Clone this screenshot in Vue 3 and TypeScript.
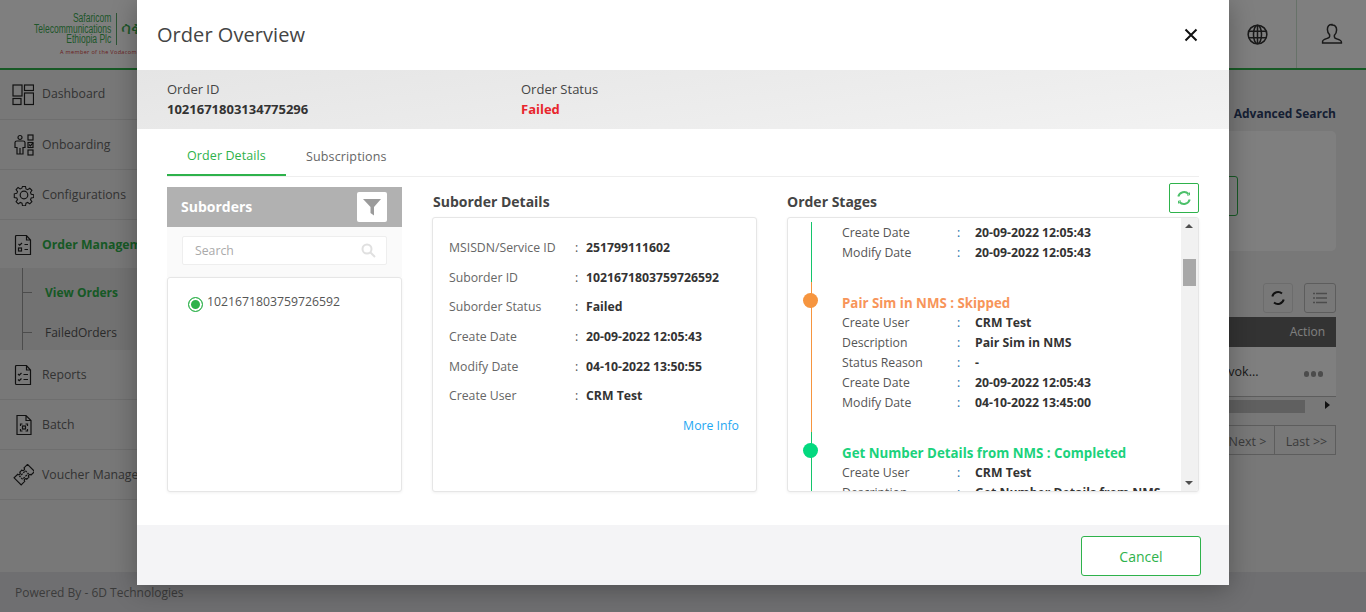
<script setup lang="ts">
import { ref } from 'vue'

const activeTab = ref('Order Details')
const tabs = ['Order Details', 'Subscriptions']

const navTop = [
  { name: 'Dashboard', icon: 'dash' },
  { name: 'Onboarding', icon: 'onboard' },
  { name: 'Configurations', icon: 'gear' },
  { name: 'Order Management', icon: 'order', active: true }
]
const navBottom = [
  { name: 'Reports', icon: 'report' },
  { name: 'Batch', icon: 'batch' },
  { name: 'Voucher Management', icon: 'voucher' }
]

const suborderDetails = [
  ['MSISDN/Service ID', '251799111602'],
  ['Suborder ID', '1021671803759726592'],
  ['Suborder Status', 'Failed'],
  ['Create Date', '20-09-2022 12:05:43'],
  ['Modify Date', '04-10-2022 13:50:55'],
  ['Create User', 'CRM Test']
]

const stages = [
  {
    rows: [
      ['Create Date', '20-09-2022 12:05:43'],
      ['Modify Date', '20-09-2022 12:05:43']
    ]
  },
  {
    title: 'Pair Sim in NMS : Skipped',
    tone: 'skipped',
    rows: [
      ['Create User', 'CRM Test'],
      ['Description', 'Pair Sim in NMS'],
      ['Status Reason', '-'],
      ['Create Date', '20-09-2022 12:05:43'],
      ['Modify Date', '04-10-2022 13:45:00']
    ]
  },
  {
    title: 'Get Number Details from NMS : Completed',
    tone: 'completed',
    rows: [
      ['Create User', 'CRM Test'],
      ['Description', 'Get Number Details from NMS']
    ]
  }
]
</script>

<template>
  <div class="page">
    <header class="topbar">
      <div class="logo">
        <div class="logo-main">
          <div class="logo-name">
            <div class="logo-squeeze">Safaricom<br />Telecommunications<br />Ethiopia Plc</div>
          </div>
          <div class="logo-am">ሳፋ</div>
        </div>
        <div class="logo-sub">A member of the Vodacom family</div>
      </div>
      <div class="top-actions">
        <div class="top-btn globe">
          <svg width="21" height="21" viewBox="0 0 22 22" fill="none" stroke="#333" stroke-width="1.6">
            <circle cx="11" cy="11" r="9.8" />
            <ellipse cx="11" cy="11" rx="4.2" ry="9.8" />
            <path d="M11 1v20M2 7.500h18M2 14.500h18" />
          </svg>
        </div>
        <div class="top-btn user">
          <svg width="22" height="22" viewBox="0 0 22 22" fill="none" stroke="#333" stroke-width="1.5">
            <path d="M11 1.500c-3 0-4.600 2.200-4.600 5 0 2.200 1 4 2.200 5.200v1.800c0 .8-.8 1.300-2 1.700-2.800.9-5 1.500-5 3.300v1.500h18.800V19c0-1.800-2.200-2.400-5-3.300-1.200-.4-2-.9-2-1.700v-1.800c1.200-1.200 2.200-3 2.200-5.200 0-2.800-1.600-5-4.600-5z" />
          </svg>
        </div>
      </div>
    </header>

    <div class="body">
      <aside class="sidebar">
        <nav class="nav">
          <div v-for="item in navTop" :key="item.name" class="nav-item" :class="{ active: item.active }">
            <svg class="nav-icon" width="22" height="22" viewBox="0 0 22 22" fill="none" stroke="#222" stroke-width="1.2">
              <template v-if="item.icon === 'dash'">
                <rect x="1" y="1" width="9" height="11" />
                <rect x="12.500" y="1" width="9" height="5.500" />
                <rect x="1" y="14.500" width="8" height="6" />
                <rect x="12.500" y="9" width="9" height="11.500" />
              </template>
              <template v-else-if="item.icon === 'onboard'">
                <circle cx="8" cy="3.500" r="2" />
                <path d="M3 8.500c0-1 1-1.500 2-1.500h6c1 0 2 .5 2 1.500v5h-2V20H5v-6.500H3zM8 14v6" />
                <rect x="16" y="1" width="5" height="5" />
                <rect x="16" y="8.500" width="5" height="5" />
                <rect x="16" y="16" width="5" height="5" />
                <path d="M17 10.500l1.300 1.300 2.700-2.800" />
              </template>
              <template v-else-if="item.icon === 'gear'">
                <circle cx="12" cy="11" r="3.800" />
                <path d="M10.300 1.500h3.400l.5 2.800 1.900.8 2.300-1.600 2.400 2.400-1.600 2.300.8 1.900 2.800.5v3.200l-2.800.5-.8 1.900 1.600 2.300-2.400 2.400-2.300-1.600-1.900.8-.5 2.800h-3.400l-.5-2.800-1.900-.8-2.300 1.600-2.400-2.400 1.600-2.300-.8-1.900-2.800-.5V9.700l2.800-.5.8-1.900-1.600-2.300L5.400 2.600l2.300 1.600 1.900-.8z" transform="translate(1.200 1.100) scale(.9)" />
              </template>
              <template v-else>
                <path d="M4.500 1.500h10l4 4.500v14.500h-14a1 1 0 0 1-1-1v-17a1 1 0 0 1 1-1zM14.500 1.500V6h4" />
                <path d="M6.500 10l1.200 1.200L10 9M12.500 10.500h3.500M12.500 15.500h3.500" />
                <rect x="6.500" y="14" width="3" height="3" />
              </template>
            </svg>
            <span>{{ item.name }}</span>
          </div>
          <div class="subnav">
            <div class="sub-item current">View Orders</div>
            <div class="sub-item">FailedOrders</div>
          </div>
          <div v-for="item in navBottom" :key="item.name" class="nav-item">
            <svg class="nav-icon" width="22" height="22" viewBox="0 0 22 22" fill="none" stroke="#222" stroke-width="1.2">
              <template v-if="item.icon === 'report'">
                <path d="M4.500 1.500h10l4 4.500v14.500h-14a1 1 0 0 1-1-1v-17a1 1 0 0 1 1-1zM14.500 1.500V6h4" />
                <path d="M6 10l1.200 1.200L9.500 9M6 15.500l1.200 1.200 2.300-2.200M11.500 10.500h4.500M11.500 15.500h4.500" />
              </template>
              <template v-else-if="item.icon === 'batch'">
                <path d="M5 1.500h9l5 5v14H5zM14 1.500v5h5" />
                <path d="M8.500 12v-2h2M13.500 10h2v2M15.500 15v2h-2M10.500 17h-2v-2" />
                <rect x="10.500" y="12" width="3" height="3" />
              </template>
              <template v-else>
                <g transform="rotate(45 12 11)">
                  <path d="M7 1.500h10v5a1.500 1.500 0 0 0 0 3v3a1.500 1.500 0 0 0 0 3v5H7v-5a1.500 1.500 0 0 0 0-3v-3a1.500 1.500 0 0 0 0-3z" transform="translate(0 -.5)" />
                  <path d="M10 7h4v8h-4z" stroke-dasharray="2 1" />
                </g>
              </template>
            </svg>
            <span>{{ item.name }}</span>
          </div>
        </nav>
        <div class="powered">Powered By - 6D Technologies</div>
      </aside>

      <main class="main">
        <div class="adv-link">Advanced Search</div>
        <div class="adv-card"><div class="adv-btn"></div></div>
        <div class="tools">
          <div class="tool">
            <svg width="18" height="18" viewBox="0 0 18 18" fill="none" stroke="#222" stroke-width="2">
              <path d="M3.300 7.500A6 6 0 0 1 13 4.500M14.700 10.500A6 6 0 0 1 5 13.500" />
            </svg>
          </div>
          <div class="tool wide">
            <svg width="14" height="12" viewBox="0 0 14 12" fill="none" stroke="#999" stroke-width="1.500">
              <path d="M3 1.500h11M3 6h11M3 10.500h11M0 1.500h2M0 6h2M0 10.500h2" />
            </svg>
          </div>
        </div>
        <div class="table-head"><span>Action</span></div>
        <div class="table-row">
          <span class="cell-text">Revok...</span>
          <span class="dots"><i></i><i></i><i></i></span>
        </div>
        <div class="table-scroll">
          <div class="table-thumb"></div>
          <div class="table-arrow"></div>
        </div>
        <div class="pager">
          <span class="page-btn next">Next &gt;</span>
          <span class="page-btn last">Last &gt;&gt;</span>
        </div>
      </main>
    </div>

    <div class="overlay"></div>

    <section class="modal">
      <div class="modal-head">
        <h2>Order Overview</h2>
        <svg class="close" width="14" height="14" viewBox="0 0 14 14" fill="none" stroke="#111" stroke-width="2">
          <path d="M1.500 1.500l11 11M12.500 1.500l-11 11" />
        </svg>
      </div>

      <div class="summary">
        <div class="summary-col">
          <div>Order ID</div>
          <b>1021671803134775296</b>
        </div>
        <div class="summary-col">
          <div>Order Status</div>
          <b class="failed">Failed</b>
        </div>
      </div>

      <div class="tabs">
        <div v-for="t in tabs" :key="t" class="tab" :class="{ on: t === activeTab }" @click="activeTab = t">{{ t }}</div>
      </div>

      <div class="columns">
        <div class="col-sub">
          <div class="sub-head">
            <span>Suborders</span>
            <div class="filter">
              <svg width="18" height="18" viewBox="0 0 18 18" fill="#9b9b9b">
                <path d="M0 1h18l-7 8v8.500L7.500 15V9z" />
              </svg>
            </div>
          </div>
          <div class="search-wrap">
            <div class="search">
              <span>Search</span>
              <svg width="15" height="15" viewBox="0 0 15 15" fill="none" stroke="#e0e0e0" stroke-width="2">
                <circle cx="6" cy="6" r="4.500" />
                <path d="M9.500 9.500L14 14" />
              </svg>
            </div>
          </div>
          <div class="sub-list">
            <span class="radio"></span>
            <span class="sub-id">1021671803759726592</span>
          </div>
        </div>

        <div class="col-details">
          <h3>Suborder Details</h3>
          <div class="details-card">
            <div v-for="r in suborderDetails" :key="r[0]" class="detail-row">
              <span class="d-label">{{ r[0] }}</span>
              <span class="d-colon">:</span>
              <b>{{ r[1] }}</b>
            </div>
            <div class="more">More Info</div>
          </div>
        </div>

        <div class="col-stages">
          <div class="stages-head">
            <h3>Order Stages</h3>
            <div class="refresh">
              <svg width="16" height="16" viewBox="0 0 16 16" fill="none" stroke="#4cc06a" stroke-width="2">
                <path d="M2.300 6.500A6 6 0 0 1 12.500 4M13.700 9.500A6 6 0 0 1 3.500 12" />
                <path d="M13.500 2.500v2.500H11M2.500 13.500V11H5" stroke-width="1" />
              </svg>
            </div>
          </div>
          <div class="stages-card">
            <div class="stages-view">
              <div v-for="(s, i) in stages" :key="i" class="stage" :class="s.tone">
                <span v-if="s.title" class="dot"></span>
                <div v-if="s.title" class="stage-title">{{ s.title }}</div>
                <div v-for="r in s.rows" :key="r[0]" class="stage-row">
                  <span class="s-label">{{ r[0] }}</span>
                  <span class="s-colon">:</span>
                  <b>{{ r[1] }}</b>
                </div>
              </div>
            </div>
            <div class="scrollbar">
              <div class="arrow up"></div>
              <div class="thumb"></div>
              <div class="arrow down"></div>
            </div>
          </div>
        </div>
      </div>

      <div class="modal-foot">
        <button class="cancel">Cancel</button>
      </div>
    </section>
  </div>
</template>

<style>
html, body {
  margin: 0;
  height: 100%;
  overflow: hidden;
}
</style>

<style scoped>
.page {
  position: relative;
  width: 1366px;
  height: 612px;
  overflow: hidden;
  display: flex;
  flex-direction: column;
  background: #f1f1f1;
  font-family: "Open Sans", sans-serif;
  font-size: 12.25px;
  color: #555;
}

.topbar {
  height: 68px;
  flex: none;
  display: flex;
  justify-content: space-between;
  background: #fff;
  border-bottom: 2px solid #2eb24b;
}

.logo {
  width: 137px;
  padding-top: 13px;
  box-sizing: border-box;
  overflow: hidden;
  white-space: nowrap;
}

.logo-main {
  display: flex;
  justify-content: flex-end;
  margin-right: -26px;
}

.logo-name {
  width: 112px;
  padding-right: 5px;
  border-right: 1px solid #5aa86a;
  text-align: right;
  font-family: "Liberation Sans", sans-serif;
  font-size: 12px;
  line-height: 10.5px;
  color: #3fae55;
}

.logo-squeeze {
  transform: scaleX(.71);
  transform-origin: right center;
}

.logo-am {
  padding-left: 4px;
  width: 42px;
  font-family: "Noto Sans", "DejaVu Sans", sans-serif;
  font-size: 17px;
  line-height: 30px;
  color: #3fae55;
}

.logo-sub {
  margin: 3px 0 0 60px;
  font-size: 5.5px;
  letter-spacing: .35px;
  color: #d23a3a;
}

.top-actions {
  display: flex;
}

.top-btn {
  width: 69px;
  display: flex;
  align-items: center;
  justify-content: center;
}

.top-btn.globe {
  width: 70px;
  padding-right: 8px;
  box-sizing: border-box;
}

.top-btn.user {
  border-left: 1px solid #cfe5d3;
}

.body {
  flex: 1;
  display: flex;
  min-height: 0;
}

.sidebar {
  width: 200px;
  flex: none;
  display: flex;
  flex-direction: column;
  justify-content: space-between;
}

.nav-item {
  height: 49px;
  display: flex;
  align-items: center;
  gap: 8px;
  padding-left: 12px;
  border-bottom: 1px solid #dcdcdc;
  color: #666;
  white-space: nowrap;
  overflow: hidden;
}

.nav-item:first-child span {
  margin-top: -2px;
}

.nav-item.active {
  color: #2eb24b;
  font-weight: 700;
  border-bottom: none;
}

.nav-icon {
  flex: none;
}

.subnav {
  position: relative;
  height: 78px;
  padding-top: 4px;
  background: #e4e4e4;
  margin-top: -1px;
}

.subnav::before {
  content: "";
  position: absolute;
  left: 22px;
  top: 0;
  bottom: 0;
  width: 1px;
  background: #999;
}

.sub-item {
  height: 40px;
  display: flex;
  align-items: center;
  padding-left: 45px;
  position: relative;
  font-size: 12px;
  color: #555;
}

.sub-item::before {
  content: "";
  position: absolute;
  left: 22px;
  top: 20px;
  width: 10px;
  height: 1px;
  background: #999;
}

.sub-item.current {
  color: #2eb24b;
  font-weight: 700;
}

.powered {
  height: 40px;
  width: 1366px;
  flex: none;
  display: flex;
  align-items: center;
  padding-left: 15px;
  box-sizing: border-box;
  background: #dfdfe2;
  font-size: 12px;
  color: #777;
  position: relative;
}

.main {
  flex: 1;
  display: flex;
  flex-direction: column;
  align-items: flex-end;
  padding: 35px 30px 0 0;
  font-size: 12px;
}

.adv-link {
  height: 18px;
  line-height: 18px;
  font-weight: 700;
  color: #2c3e66;
}

.adv-card {
  position: relative;
  width: 300px;
  height: 120px;
  margin-top: 8px;
  background: #fff;
  border-radius: 5px;
}

.adv-btn {
  position: absolute;
  left: 170px;
  top: 45px;
  width: 30px;
  height: 38px;
  border: 1px solid #2eb24b;
  border-radius: 3px;
}

.tools {
  display: flex;
  gap: 11px;
  margin-top: 32px;
}

.tool {
  width: 28px;
  height: 28px;
  border: 1px solid #d8d8d8;
  border-radius: 3px;
  display: flex;
  align-items: center;
  justify-content: center;
}

.tool.wide {
  width: 30px;
  border-color: #bbb;
}

.table-head {
  width: 300px;
  height: 30px;
  margin-top: 4px;
  display: flex;
  align-items: center;
  justify-content: flex-end;
  padding: 0 11px 2px 0;
  box-sizing: border-box;
  background: #666;
  color: #fff;
}

.table-row {
  width: 300px;
  height: 50px;
  box-sizing: border-box;
  display: flex;
  align-items: center;
  justify-content: flex-end;
  padding-right: 13px;
  background: #fff;
  border-bottom: 1px solid #bbb;
  font-size: 12.5px;
  color: #333;
}

.cell-text {
  margin-right: 45px;
}

.dots {
  display: flex;
  gap: 1.5px;
  padding-top: 5px;
}

.dots i {
  width: 5.5px;
  height: 5.5px;
  border-radius: 50%;
  background: #999;
}

.table-scroll {
  width: 300px;
  height: 18px;
  position: relative;
  background: #f1f1f1;
}

.table-thumb {
  width: 269px;
  height: 13px;
  margin-top: 3px;
  background: #c1c1c1;
}

.table-arrow {
  position: absolute;
  right: 6px;
  top: 4px;
  border-left: 5px solid #222;
  border-top: 4.5px solid transparent;
  border-bottom: 4.5px solid transparent;
}

.pager {
  display: flex;
  margin-top: 10px;
  height: 28px;
  border: 1px solid #bbb;
  font-size: 12.5px;
  color: #777;
}

.page-btn {
  display: flex;
  align-items: center;
  justify-content: center;
  width: 60px;
  box-sizing: border-box;
  padding-top: 2px;
}

.page-btn.next {
  border-right: 1px solid #bbb;
  padding-left: 6px;
}

.page-btn.last {
  padding-left: 3px;
}

.overlay {
  position: absolute;
  inset: 0;
  background: rgba(0, 0, 0, .5);
}

.modal {
  position: absolute;
  left: 137px;
  top: 0;
  width: 1092px;
  height: 585px;
  display: flex;
  flex-direction: column;
  background: #fff;
  box-shadow: 0 4px 24px rgba(0, 0, 0, .3);
}

.modal-head {
  height: 70px;
  flex: none;
  display: flex;
  align-items: center;
  justify-content: space-between;
  padding: 0 31px 0 20px;
}

.modal-head h2 {
  margin: 0 0 2px;
  font-size: 20px;
  font-weight: 400;
  letter-spacing: .05px;
  color: #444;
}

.summary {
  height: 59px;
  flex: none;
  display: flex;
  padding: 9px 0 0 30px;
  box-sizing: border-box;
  background: linear-gradient(172deg, #e5e5e5, #f2f2f2);
  line-height: 20px;
  color: #444;
}

.summary-col {
  width: 354px;
  font-size: 13px;
}

.summary-col b {
  color: #333;
}

.summary-col b.failed {
  color: #e8262d;
}

.tabs {
  height: 47px;
  flex: none;
  display: flex;
  margin: 0 30px;
  border-bottom: 1px solid #eee;
  font-size: 12.5px;
}

.tab {
  padding: 0 20px;
  height: 47px;
  line-height: 55px;
  box-sizing: border-box;
  letter-spacing: .15px;
  color: #666;
  cursor: pointer;
}

.tab.on {
  color: #2eb24b;
  line-height: 54px;
  letter-spacing: .1px;
  border-bottom: 2px solid #2eb24b;
}

.columns {
  flex: 1;
  display: flex;
  padding: 10px 30px 0;
  min-height: 0;
}

.col-sub {
  width: 235px;
  flex: none;
  height: 305px;
  display: flex;
  flex-direction: column;
}

.sub-head {
  height: 40px;
  flex: none;
  display: flex;
  align-items: center;
  justify-content: space-between;
  padding: 0 15px 0 14px;
  background: #b1b1b1;
  color: #fff;
  font-size: 14px;
  font-weight: 700;
}

.sub-head span {
  margin-top: -2px;
}

.filter {
  width: 30px;
  height: 30px;
  display: flex;
  align-items: center;
  justify-content: center;
  background: #fff;
  border-radius: 2px;
}

.search-wrap {
  height: 50px;
  flex: none;
  padding: 9px 15px 0;
  box-sizing: border-box;
  background: #fafafa;
}

.search {
  height: 29px;
  box-sizing: border-box;
  display: flex;
  align-items: center;
  justify-content: space-between;
  padding: 0 10px 0 12px;
  background: #fff;
  border: 1px solid #eee;
  border-radius: 2px;
  color: #aaa;
}

.sub-list {
  flex: 1;
  display: flex;
  align-items: flex-start;
  gap: 4px;
  padding: 15px 20px;
  background: #fff;
  border: 1px solid #e6e6e6;
  border-radius: 3px;
  box-shadow: 0 1px 3px rgba(0, 0, 0, .06);
}

.radio {
  width: 15px;
  height: 15px;
  box-sizing: border-box;
  margin-top: 4px;
  flex: none;
  border: 1px solid #2eb24b;
  border-radius: 50%;
  background: #2eb24b;
  box-shadow: inset 0 0 0 2px #fff;
}

.sub-id {
  color: #555;
  line-height: 18px;
}

.col-details {
  width: 325px;
  flex: none;
  margin-left: 30px;
}

.col-details h3,
.col-stages h3 {
  margin: 0;
  font-size: 14px;
  line-height: 20px;
  font-weight: 700;
  color: #444;
}

.col-details h3 {
  padding: 5px 0 0 1px;
  height: 25px;
}

.details-card {
  height: 275px;
  box-sizing: border-box;
  padding: 15px 16px 0;
  background: #fff;
  border: 1px solid #e6e6e6;
  border-radius: 3px;
  box-shadow: 0 1px 3px rgba(0, 0, 0, .06);
}

.detail-row {
  height: 29.6px;
  display: flex;
  align-items: center;
}

.detail-row b {
  color: #333;
}

.d-label {
  width: 126px;
  color: #666;
}

.d-colon {
  width: 11px;
}

.more {
  margin-top: 5px;
  margin-right: 1px;
  text-align: right;
  color: #1ea7f2;
  line-height: 20px;
}

.col-stages {
  width: 412px;
  flex: none;
  margin-left: 30px;
}

.stages-head {
  height: 30px;
  display: flex;
  justify-content: space-between;
  position: relative;
}

.stages-head h3 {
  padding-top: 5px;
}

.refresh {
  position: absolute;
  right: 0;
  top: -4px;
  width: 30px;
  height: 30px;
  box-sizing: border-box;
  display: flex;
  align-items: center;
  justify-content: center;
  background: #fff;
  border: 1px solid #2eb24b;
  border-radius: 2px;
}

.stages-card {
  height: 275px;
  box-sizing: border-box;
  display: flex;
  background: #fff;
  border: 1px solid #e6e6e6;
  border-radius: 3px;
  box-shadow: 0 1px 3px rgba(0, 0, 0, .06);
  overflow: hidden;
}

.stages-view {
  flex: 1;
  overflow: hidden;
  padding-top: 4px;
}

.stage {
  position: relative;
  padding: 0 0 20px 30px;
  margin-left: 23px;
  border-left: 1px solid #14c46b;
}

.stage.skipped {
  border-left-color: #f6953f;
}

.dot {
  position: absolute;
  left: -9px;
  top: 11px;
  width: 15px;
  height: 15px;
  border-radius: 50%;
}

.skipped .dot {
  background: #f6953f;
}

.completed .dot {
  background: #03d97f;
}

.stage-title {
  padding-top: 11px;
  height: 19px;
  line-height: 20px;
  font-size: 13.3px;
  font-weight: 700;
}

.skipped .stage-title {
  color: #f7955a;
}

.completed .stage-title {
  color: #1bd27c;
}

.stage-row {
  height: 20px;
  display: flex;
  align-items: center;
  white-space: nowrap;
}

.stage-row b {
  color: #333;
}

.s-label {
  width: 115px;
  color: #555;
}

.s-colon {
  width: 18px;
  color: #1a6fa8;
}

.scrollbar {
  width: 17px;
  flex: none;
  position: relative;
  background: #f1f1f1;
}

.thumb {
  position: absolute;
  left: 2px;
  right: 2px;
  top: 41px;
  height: 27px;
  background: #a8a8a8;
}

.arrow {
  position: absolute;
  left: 4px;
  border-left: 4px solid transparent;
  border-right: 4px solid transparent;
}

.arrow.up {
  top: 6px;
  border-bottom: 4px solid #505050;
}

.arrow.down {
  bottom: 6px;
  border-top: 4px solid #505050;
}

.modal-foot {
  height: 60px;
  box-sizing: border-box;
  flex: none;
  display: flex;
  align-items: flex-start;
  justify-content: flex-end;
  padding: 11px 28px 0 0;
  background: #f4f4f6;
}

.cancel {
  width: 120px;
  height: 40px;
  background: #fff;
  border: 1px solid #2eb24b;
  border-radius: 3px;
  color: #2eb24b;
  font-family: inherit;
  font-size: 14px;
}
</style>
